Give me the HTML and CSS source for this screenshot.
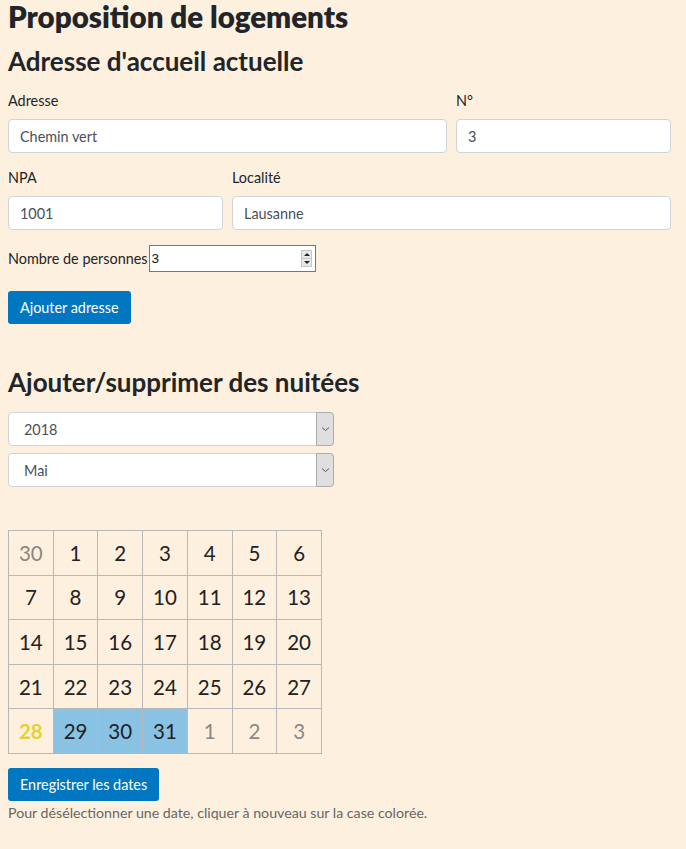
FILE: index.html
```html
<!DOCTYPE html>
<html lang="fr">
<head>
<meta charset="utf-8">
<title>Proposition de logements</title>
<link rel="stylesheet" href="styles.css">
</head>
<body>
<h1 class="title">Proposition de logements</h1>
<h2 class="section-title">Adresse d'accueil actuelle</h2>
<form class="address-form">
  <div class="row row-a">
    <div class="field">
      <label class="lbl">Adresse</label>
      <input class="ctl" type="text" value="Chemin vert">
    </div>
    <div class="field">
      <label class="lbl">N°</label>
      <input class="ctl" type="text" value="3">
    </div>
  </div>
  <div class="row row-b">
    <div class="field">
      <label class="lbl">NPA</label>
      <input class="ctl" type="text" value="1001">
    </div>
    <div class="field">
      <label class="lbl">Localité</label>
      <input class="ctl" type="text" value="Lausanne">
    </div>
  </div>
  <div class="persons">
    <span class="persons-lbl">Nombre de personnes</span>
    <span class="num">
      <span class="num-val">3</span>
      <span class="spin"><span class="spin-up"></span><span class="spin-dn"></span></span>
    </span>
  </div>
  <button type="button" class="btn">Ajouter adresse</button>
</form>

<h2 class="section-title nights">Ajouter/supprimer des nuitées</h2>
<div class="sel"><span class="sel-val">2018</span><span class="sel-arrow"><svg width="9" height="6" viewBox="0 0 9 6"><path d="M1 1.5 L4.5 4.5 L8 1.5" fill="none" stroke="#555" stroke-width="1"/></svg></span></div>
<div class="sel"><span class="sel-val">Mai</span><span class="sel-arrow"><svg width="9" height="6" viewBox="0 0 9 6"><path d="M1 1.5 L4.5 4.5 L8 1.5" fill="none" stroke="#555" stroke-width="1"/></svg></span></div>

<table class="cal">
  <tr><td class="other">30</td><td>1</td><td>2</td><td>3</td><td>4</td><td>5</td><td>6</td></tr>
  <tr><td>7</td><td>8</td><td>9</td><td>10</td><td>11</td><td>12</td><td>13</td></tr>
  <tr><td>14</td><td>15</td><td>16</td><td>17</td><td>18</td><td>19</td><td>20</td></tr>
  <tr><td>21</td><td>22</td><td>23</td><td>24</td><td>25</td><td>26</td><td>27</td></tr>
  <tr><td class="today">28</td><td class="picked">29</td><td class="picked">30</td><td class="picked">31</td><td class="other">1</td><td class="other">2</td><td class="other">3</td></tr>
</table>

<button type="button" class="btn btn-save">Enregistrer les dates</button>
<p class="help">Pour désélectionner une date, cliquer à nouveau sur la case colorée.</p>
</body>
</html>
```

FILE: styles.css
```css
html, body {
  background: #fef0de;
}
body {
  margin: 0;
  padding: 0 15px 0 8px;
  font-family: Lato, "Noto Sans", sans-serif;
  color: #212529;
  font-size: 14.4px;
}
.title {
  margin: 0;
  padding-top: 0;
  font-size: 29.5px;
  line-height: 34px;
  font-weight: 800;
}
.section-title {
  margin: 12px 0 0;
  font-size: 26px;
  line-height: 31px;
  font-weight: 700;
}
.address-form {
  margin-top: 14px;
}
.row {
  display: grid;
  gap: 9px;
}
.row-a { grid-template-columns: 439px 215px; }
.row-b { grid-template-columns: 215px 439px; margin-top: 15px; }
.field {
  display: flex;
  flex-direction: column;
}
.lbl {
  font-size: 14.4px;
  line-height: 20px;
  margin-bottom: 8px;
}
.ctl {
  box-sizing: border-box;
  height: 34px;
  border: 1px solid #ced4da;
  border-radius: 4px;
  background: #fff;
  padding: 0 11px;
  font-family: Lato, sans-serif;
  font-size: 14.4px;
  color: #495057;
  margin: 0;
}
.persons {
  display: flex;
  align-items: center;
  margin-top: 15px;
  height: 27px;
}
.persons-lbl {
  font-size: 14.4px;
  margin-right: 1px;
}
.num {
  box-sizing: border-box;
  width: 167px;
  height: 27px;
  border: 1px solid #767676;
  background: #fff;
  display: flex;
  align-items: center;
  justify-content: space-between;
  padding: 0 3px 0 2px;
}
.num-val {
  font-family: "Liberation Sans", Arial, sans-serif;
  font-size: 13.5px;
  color: #111;
}
.spin {
  display: flex;
  flex-direction: column;
  width: 11px;
  height: 17px;
  border: 1px solid #c6c6c6;
  background: #e8e8e8;
  box-sizing: border-box;
}
.spin-up, .spin-dn {
  flex: 1;
  position: relative;
}
.spin-up { border-bottom: 1px solid #c6c6c6; }
.spin-up::after, .spin-dn::after {
  content: "";
  position: absolute;
  left: 2px;
  border-left: 3px solid transparent;
  border-right: 3px solid transparent;
}
.spin-up::after { top: 2px; border-bottom: 3px solid #222; }
.spin-dn::after { top: 2px; border-top: 3px solid #222; }
.btn {
  display: block;
  margin-top: 19px;
  height: 33px;
  padding: 0 12px;
  border: 0;
  border-radius: 3px;
  background: #0077c0;
  color: #fff;
  font-family: Lato, sans-serif;
  font-size: 14.4px;
}
.nights {
  margin-top: 43px;
}
.sel {
  box-sizing: border-box;
  width: 326px;
  height: 34px;
  margin-top: 14px;
  border: 1px solid #ced4da;
  border-radius: 4px;
  background: #fff;
  display: flex;
  justify-content: space-between;
  align-items: stretch;
}
.sel + .sel { margin-top: 7px; }
.sel-val {
  padding-left: 15px;
  display: flex;
  align-items: center;
  font-size: 14.4px;
  color: #495057;
}
.sel-arrow {
  box-sizing: border-box;
  width: 18px;
  margin: -1px -1px -1px 0;
  background: #dfdfdf;
  border: 1px solid #acacac;
  border-radius: 0 4px 4px 0;
  display: flex;
  align-items: center;
  justify-content: center;
}
.cal {
  margin-top: 43px;
  border-collapse: collapse;
  width: 314px;
  table-layout: fixed;
}
.cal td {
  border: 1px solid #b8b8b8;
  height: 43.6px;
  padding: 0;
  text-align: center;
  font-size: 20.5px;
  color: #222;
}
.cal td.other { color: #888; }
.cal td.today { color: #e4d13a; font-weight: 700; }
.cal td.picked { background: #8ac2e4; }
.btn-save {
  margin-top: 14px;
}
.help {
  margin: 3px 0 0;
  font-size: 14.2px;
  color: #666;
}
```
